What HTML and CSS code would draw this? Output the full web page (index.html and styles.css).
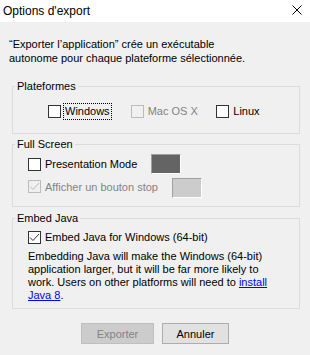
FILE: index.html
```html
<!DOCTYPE html>
<html lang="fr">
<head>
    <meta charset="UTF-8">
    <title>Options d'export</title>
    <link rel="stylesheet" href="styles.css">
</head>
<body>
    <div class="dialog">
        <!-- Title bar -->
        <div class="titlebar">
            <span class="title">Options d'export</span>
            <svg class="close" width="10" height="10" viewBox="0 0 10 10">
                <path d="M0.5 0.5L9.5 9.5M9.5 0.5L0.5 9.5" stroke="#000" stroke-width="1" fill="none"/>
            </svg>
        </div>

        <div class="content">
            <p class="intro">“Exporter l’application” crée un exécutable<br>autonome pour chaque plateforme sélectionnée.</p>

            <!-- Platforms -->
            <fieldset class="group">
                <legend>Plateformes</legend>
                <div class="platforms">
                    <label class="check platform"><span class="box"></span><span class="focus">Windows</span></label>
                    <label class="check platform disabled"><span class="box"></span><span>Mac OS X</span></label>
                    <label class="check platform"><span class="box"></span><span>Linux</span></label>
                </div>
            </fieldset>

            <!-- Full screen -->
            <fieldset class="group">
                <legend>Full Screen</legend>
                <div class="screen">
                    <div class="screen-row first">
                        <label class="check"><span class="box"></span><span>Presentation Mode</span></label>
                        <span class="swatch dark"></span>
                    </div>
                    <div class="screen-row second">
                        <label class="check disabled"><span class="box checked">
                            <svg width="11" height="11" viewBox="0 0 11 11"><path d="M1 5.5L4 8.5L10 2" stroke="#bcbcbc" stroke-width="1" fill="none"/></svg>
                        </span><span>Afficher un bouton stop</span></label>
                        <span class="swatch light"></span>
                    </div>
                </div>
            </fieldset>

            <!-- Embed Java -->
            <fieldset class="group embed-group">
                <legend>Embed Java</legend>
                <div class="embed">
                    <label class="check"><span class="box checked">
                        <svg width="11" height="11" viewBox="0 0 11 11"><path d="M1 5.5L4 8.5L10 2" stroke="#333" stroke-width="1" fill="none"/></svg>
                    </span><span>Embed Java for Windows (64-bit)</span></label>
                    <p class="note">Embedding Java will make the Windows (64-bit)<br>application larger, but it will be far more likely to<br>work. Users on other platforms will need to <a href="#">install<br>Java 8</a>.</p>
                </div>
            </fieldset>

            <div class="actions">
                <button class="btn export" disabled>Exporter</button>
                <button class="btn cancel">Annuler</button>
            </div>
        </div>
    </div>
</body>
</html>
```

FILE: styles.css
```css
:root {
    --bg: #f0f0f0;
    --line: #dcdcdc;
    --disabled: #838383;
}

body {
    margin: 0;
    background: var(--bg);
    font-family: "Liberation Sans", Arial, sans-serif;
    font-size: 11px;
    color: #000;
}

.dialog {
    width: 310px;
    height: 355px;
}

/* Title bar */
.titlebar {
    height: 22px;
    background: #fff;
    display: flex;
    align-items: center;
    justify-content: space-between;
    padding: 0 8px 0 3px;
}

.title {
    font-size: 12px;
    margin-top: -1px;
}

.close {
    display: block;
    margin-top: -2px;
}

.content {
    padding: 15px 0 0 9px;
}

.intro {
    margin: 0 0 14px;
    line-height: 14px;
}

/* Group boxes */
.group {
    width: 286px;
    margin: 0 0 3px 3px;
    padding: 0;
    border: 1px solid var(--line);
    min-width: 0;
}

.group legend {
    margin-left: 2px;
    padding: 0 2px;
    line-height: 14px;
}

.embed-group {
    margin-top: 4px;
}

/* Checkboxes */
.check {
    display: flex;
    align-items: center;
    gap: 4px;
}

.box {
    width: 11px;
    height: 11px;
    border: 1px solid #333;
    background: #fff;
    flex: none;
    display: flex;
}

.disabled {
    color: var(--disabled);
}

.disabled .box {
    border-color: #bcbcbc;
    background: var(--bg);
}

.platforms {
    display: flex;
    padding: 11px 0 14px 35px;
    line-height: 15px;
}

.platform {
    width: 85px;
}

.platform.disabled {
    width: 88px;
}

.focus {
    outline: 1px dotted #000;
    outline-offset: 0;
    padding: 0 1px;
    margin-left: -1px;
}

/* Full screen */
.screen {
    padding: 3px 0 8px 15px;
}

.screen-row {
    display: flex;
    height: 20px;
}

.screen-row + .screen-row {
    margin-top: 4px;
}

.screen-row .check {
    align-items: flex-start;
}

.first .check {
    line-height: 20px;
}

.first .box {
    margin-top: 4px;
}

.second .check {
    line-height: 18px;
}

.second .box {
    margin-top: 2px;
}

.swatch {
    box-sizing: border-box;
    width: 30px;
    height: 20px;
    margin-left: 14px;
    border-top: 1px solid #a0a0a0;
    border-left: 1px solid #a0a0a0;
    border-right: 1px solid #fff;
    border-bottom: 1px solid #fff;
}

.swatch.dark {
    background: #646464;
}

.swatch.light {
    background: #cccccc;
}

/* Embed java */
.embed {
    padding: 5px 0 6px 15px;
    line-height: 15px;
}

.embed .box {
    margin-top: 1px;
    align-self: flex-start;
}

.note {
    margin: 5px 0 0;
    line-height: 13px;
}

.note a {
    color: #0000ff;
}

/* Buttons */
.actions {
    display: flex;
    justify-content: center;
    gap: 8px;
    margin: 14px 0 0 -9px;
}

.btn {
    height: 21px;
    padding: 0;
    font-family: inherit;
    font-size: 11px;
    border: 1px solid #adadad;
    background: #e1e1e1;
    color: #000;
}

.export {
    width: 73px;
    background: #cccccc;
    border-color: #bfbfbf;
    color: var(--disabled);
}

.cancel {
    width: 67px;
}
```
